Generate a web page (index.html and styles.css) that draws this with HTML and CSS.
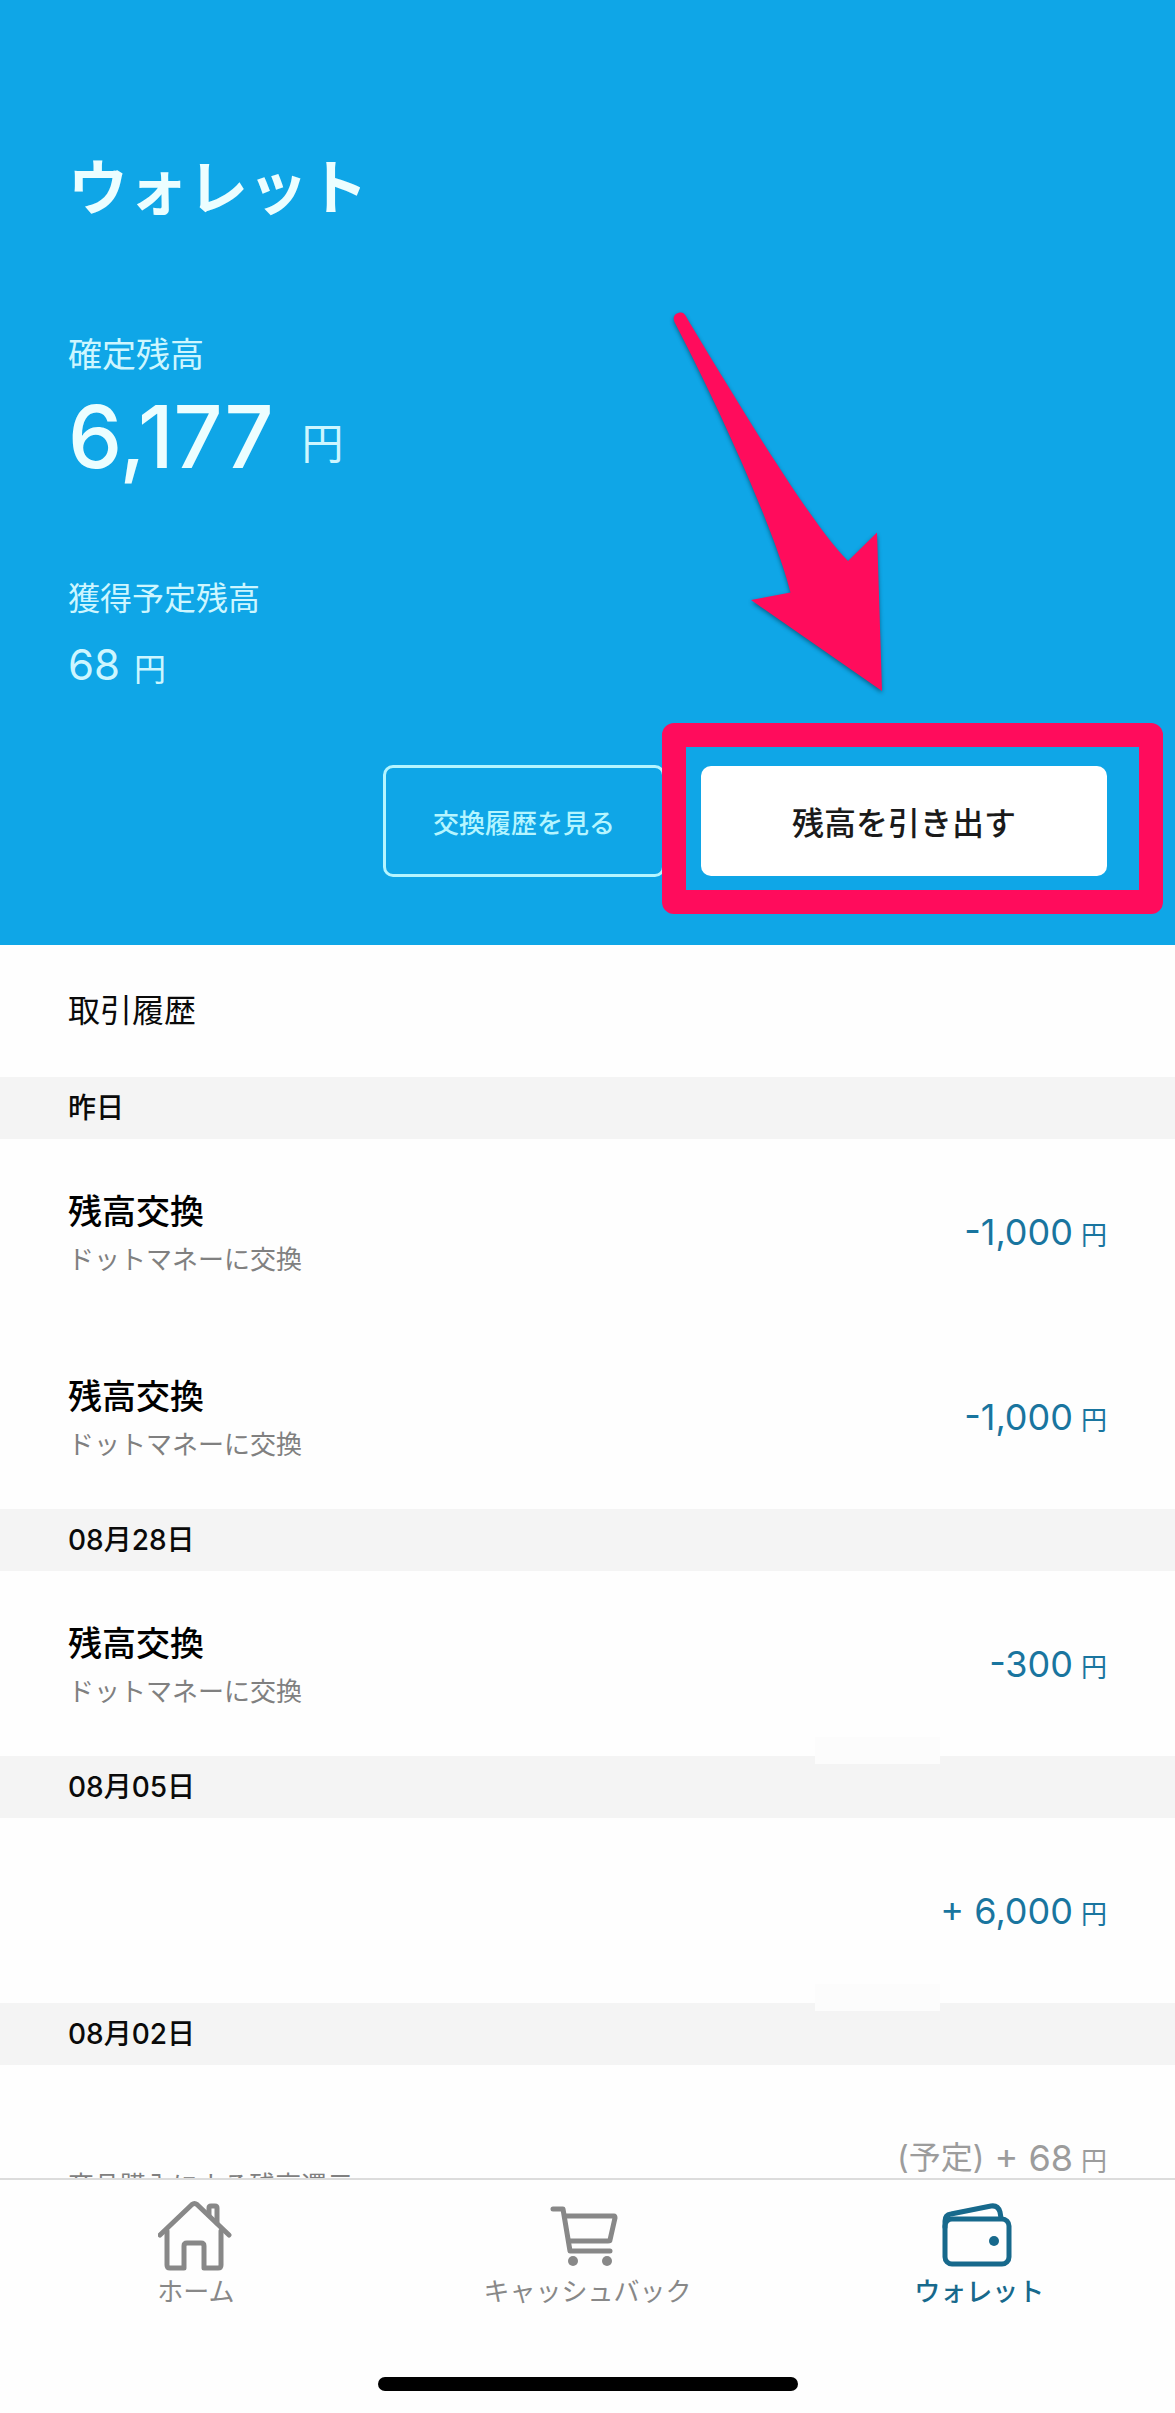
FILE: index.html
```html
<!DOCTYPE html>
<html lang="ja">

<head>
    <meta charset="UTF-8">
    <meta name="viewport" content="width=device-width, initial-scale=1.0">
    <title>ウォレット</title>
    <link rel="stylesheet" href="styles.css">
</head>

<body>
    <main class="content">
        <header class="wallet">
            <h1>ウォレット</h1>
            <p class="label">確定残高</p>
            <p class="balance">6,177<span class="yen">円</span></p>
            <p class="label label-pending">獲得予定残高</p>
            <p class="pending">68<span class="yen">円</span></p>
            <div class="actions">
                <button type="button" class="btn-history">交換履歴を見る</button>
                <div class="withdraw">
                    <button type="button" class="btn-withdraw">残高を引き出す</button>
                    <div class="frame"></div>
                    <svg class="arrow" viewBox="0 0 216 384" aria-hidden="true">
                        <path d="M3.5 12C1 6 5 2.5 10 2.5C13 2.5 15 6 17 10C70 98 140 214 177 251L206 222.5L211 381L80 290L119.5 282.5C108 235 62 125 3.5 12Z" />
                    </svg>
                </div>
            </div>
        </header>

        <section class="history">
            <h2>取引履歴</h2>

            <h3>昨日</h3>
            <ul>
                <li>
                    <div class="detail">
                        <p class="title">残高交換</p>
                        <p class="note">ドットマネーに交換</p>
                    </div>
                    <p class="amount">-1,000<span class="yen">円</span></p>
                </li>
                <li>
                    <div class="detail">
                        <p class="title">残高交換</p>
                        <p class="note">ドットマネーに交換</p>
                    </div>
                    <p class="amount">-1,000<span class="yen">円</span></p>
                </li>
            </ul>

            <h3>08月28日</h3>
            <ul>
                <li>
                    <div class="detail">
                        <p class="title">残高交換</p>
                        <p class="note">ドットマネーに交換</p>
                    </div>
                    <p class="amount">-300<span class="yen">円</span></p>
                </li>
            </ul>

            <h3 class="masked">08月05日</h3>
            <ul>
                <li>
                    <div class="detail">
                        <p class="title"></p>
                        <p class="note"></p>
                    </div>
                    <p class="amount">+ 6,000<span class="yen">円</span></p>
                </li>
            </ul>

            <h3 class="masked">08月02日</h3>
            <ul>
                <li>
                    <div class="detail">
                        <p class="title"></p>
                        <p class="note">商品購入による残高還元</p>
                    </div>
                    <p class="amount planned"><span class="tag">(予定)</span> + 68<span class="yen">円</span></p>
                </li>
            </ul>
        </section>
    </main>

    <nav class="tabbar">
        <div class="tabs">
            <a href="#home">
                <svg viewBox="0 0 76 72" aria-hidden="true">
                    <path d="M2 35L34 4.500Q36.500 2.500 39 4.500L71 35" />
                    <path d="M51 15V8Q51 6 53 6H57Q59 6 59 8V23" />
                    <path d="M9 31V65Q9 68 12 68H26V46Q26 43 29 43H43Q46 43 46 46V68H60Q63 68 63 65V31" />
                </svg>
                ホーム
            </a>
            <a href="#cashback">
                <svg viewBox="0 0 76 72" aria-hidden="true">
                    <path d="M4 9H14L21 51H61" />
                    <path d="M16 16H65Q66 16 66 18L61 40Q61 41 59 41H20" />
                    <circle class="dot" cx="24" cy="61" r="5" />
                    <circle class="dot" cx="58" cy="61" r="5" />
                </svg>
                キャッシュバック
            </a>
            <a href="#wallet" class="active">
                <svg viewBox="0 0 76 72" aria-hidden="true">
                    <rect x="4" y="19" width="64" height="45" rx="7" />
                    <path d="M4 27V21Q4 15 10 14L50 6Q57 5 59 12L60 18" />
                    <circle class="dot" cx="53" cy="41" r="5" />
                </svg>
                ウォレット
            </a>
        </div>
        <div class="home-indicator"></div>
    </nav>
</body>

</html>
```

FILE: styles.css
```css
* {
    margin: 0;
    padding: 0;
    box-sizing: border-box;
}

body {
    display: flex;
    flex-direction: column;
    height: 100vh;
    font-family: Inter, "Noto Sans CJK JP", sans-serif;
    background-color: #fefefe;
    color: #0a0a0a;
}

.content {
    flex: 1;
    min-height: 0;
    overflow-y: auto;
    scrollbar-width: none;
}

/* Balance */
.wallet {
    padding: 152px 68px 68px;
    background-color: #0fa6e7;
    color: #cdf6ff;
}

.wallet h1 {
    font-size: 60px;
    line-height: 72px;
    font-weight: 700;
    color: #ecfeff;
}

.label {
    margin-top: 111px;
    font-size: 34px;
    line-height: 40px;
}

.label-pending {
    margin-top: 98px;
    font-size: 32px;
}

.balance,
.pending {
    display: flex;
    align-items: flex-end;
}

.balance {
    margin-top: 18px;
    font-size: 86px;
    line-height: 88px;
    font-weight: 500;
    color: #ecfeff;
}

.balance .yen {
    margin-left: 28px;
    font-size: 42px;
    line-height: 74px;
    font-weight: 400;
    color: #cdf6ff;
}

.pending {
    margin-top: 24px;
    font-size: 42px;
    line-height: 44px;
}

.pending .yen {
    margin-left: 14px;
    font-size: 32px;
    line-height: 34px;
}

.actions {
    display: flex;
    justify-content: flex-end;
    align-items: center;
    gap: 36px;
    margin-top: 78px;
}

.actions button {
    font-family: inherit;
    border-radius: 10px;
    cursor: pointer;
}

.btn-history {
    width: 282px;
    height: 112px;
    border: 3px solid #b5f5ff;
    background-color: transparent;
    color: #b5f5ff;
    font-size: 26px;
    font-weight: 500;
}

.withdraw {
    position: relative;
}

.btn-withdraw {
    display: block;
    width: 406px;
    height: 110px;
    border: none;
    background-color: #fff;
    color: #1a1a1a;
    font-size: 32px;
    font-weight: 500;
}

.frame {
    position: absolute;
    top: -43px;
    right: -56px;
    bottom: -38px;
    left: -39px;
    border: 24px solid #ff0c5c;
    border-radius: 12px;
    pointer-events: none;
}

.arrow {
    position: absolute;
    right: 220px;
    bottom: 182px;
    width: 216px;
    height: 384px;
    fill: #ff0c5c;
    filter: drop-shadow(0 2px 2px rgba(0, 0, 0, 0.4));
    pointer-events: none;
}

/* Transactions */
.history h2 {
    padding: 0 68px;
    font-size: 32px;
    line-height: 132px;
    font-weight: 400;
}

.history h3 {
    padding: 0 68px;
    background-color: #f4f4f4;
    font-size: 28px;
    line-height: 62px;
    font-weight: 500;
}

.masked {
    position: relative;
}

.masked::after {
    content: "";
    position: absolute;
    top: -19px;
    right: 20%;
    width: 125px;
    height: 27px;
    background-color: #fcfcfc;
}

.history ul {
    list-style: none;
}

.history li {
    display: flex;
    justify-content: space-between;
    align-items: center;
    height: 185px;
    padding: 0 68px;
}

.detail {
    padding-top: 8px;
}

.title {
    min-height: 48px;
    font-size: 34px;
    line-height: 48px;
    font-weight: 500;
    color: #000;
}

.note {
    min-height: 48px;
    font-size: 26px;
    line-height: 48px;
    color: #808080;
}

.amount {
    display: flex;
    align-items: flex-end;
    gap: 8px;
    font-size: 36px;
    line-height: 48px;
    white-space: pre;
    color: #19759f;
}

.amount .yen {
    font-size: 26px;
    line-height: 40px;
}

.planned {
    gap: 0;
    color: #9c9c9c;
}

.planned .yen {
    margin-left: 8px;
}

.tag {
    font-size: 32px;
}

/* Tab bar */
.tabbar {
    padding: 20px 0 22px;
    border-top: 2px solid #dcdcdc;
    background-color: #fefefe;
}

.tabs {
    display: grid;
    grid-template-columns: repeat(3, 1fr);
}

.tabs a {
    display: flex;
    flex-direction: column;
    align-items: center;
    color: #888;
    font-size: 26px;
    line-height: 40px;
    text-decoration: none;
}

.tabs a.active {
    color: #17698c;
    font-weight: 500;
}

.tabs svg {
    width: 76px;
    height: 72px;
    fill: none;
    stroke: currentColor;
    stroke-width: 5;
    stroke-linecap: round;
    stroke-linejoin: round;
}

.tabs .dot {
    fill: currentColor;
    stroke: none;
}

.home-indicator {
    width: 420px;
    height: 14px;
    margin: 65px auto 0;
    border-radius: 7px;
    background-color: #000;
}
```
